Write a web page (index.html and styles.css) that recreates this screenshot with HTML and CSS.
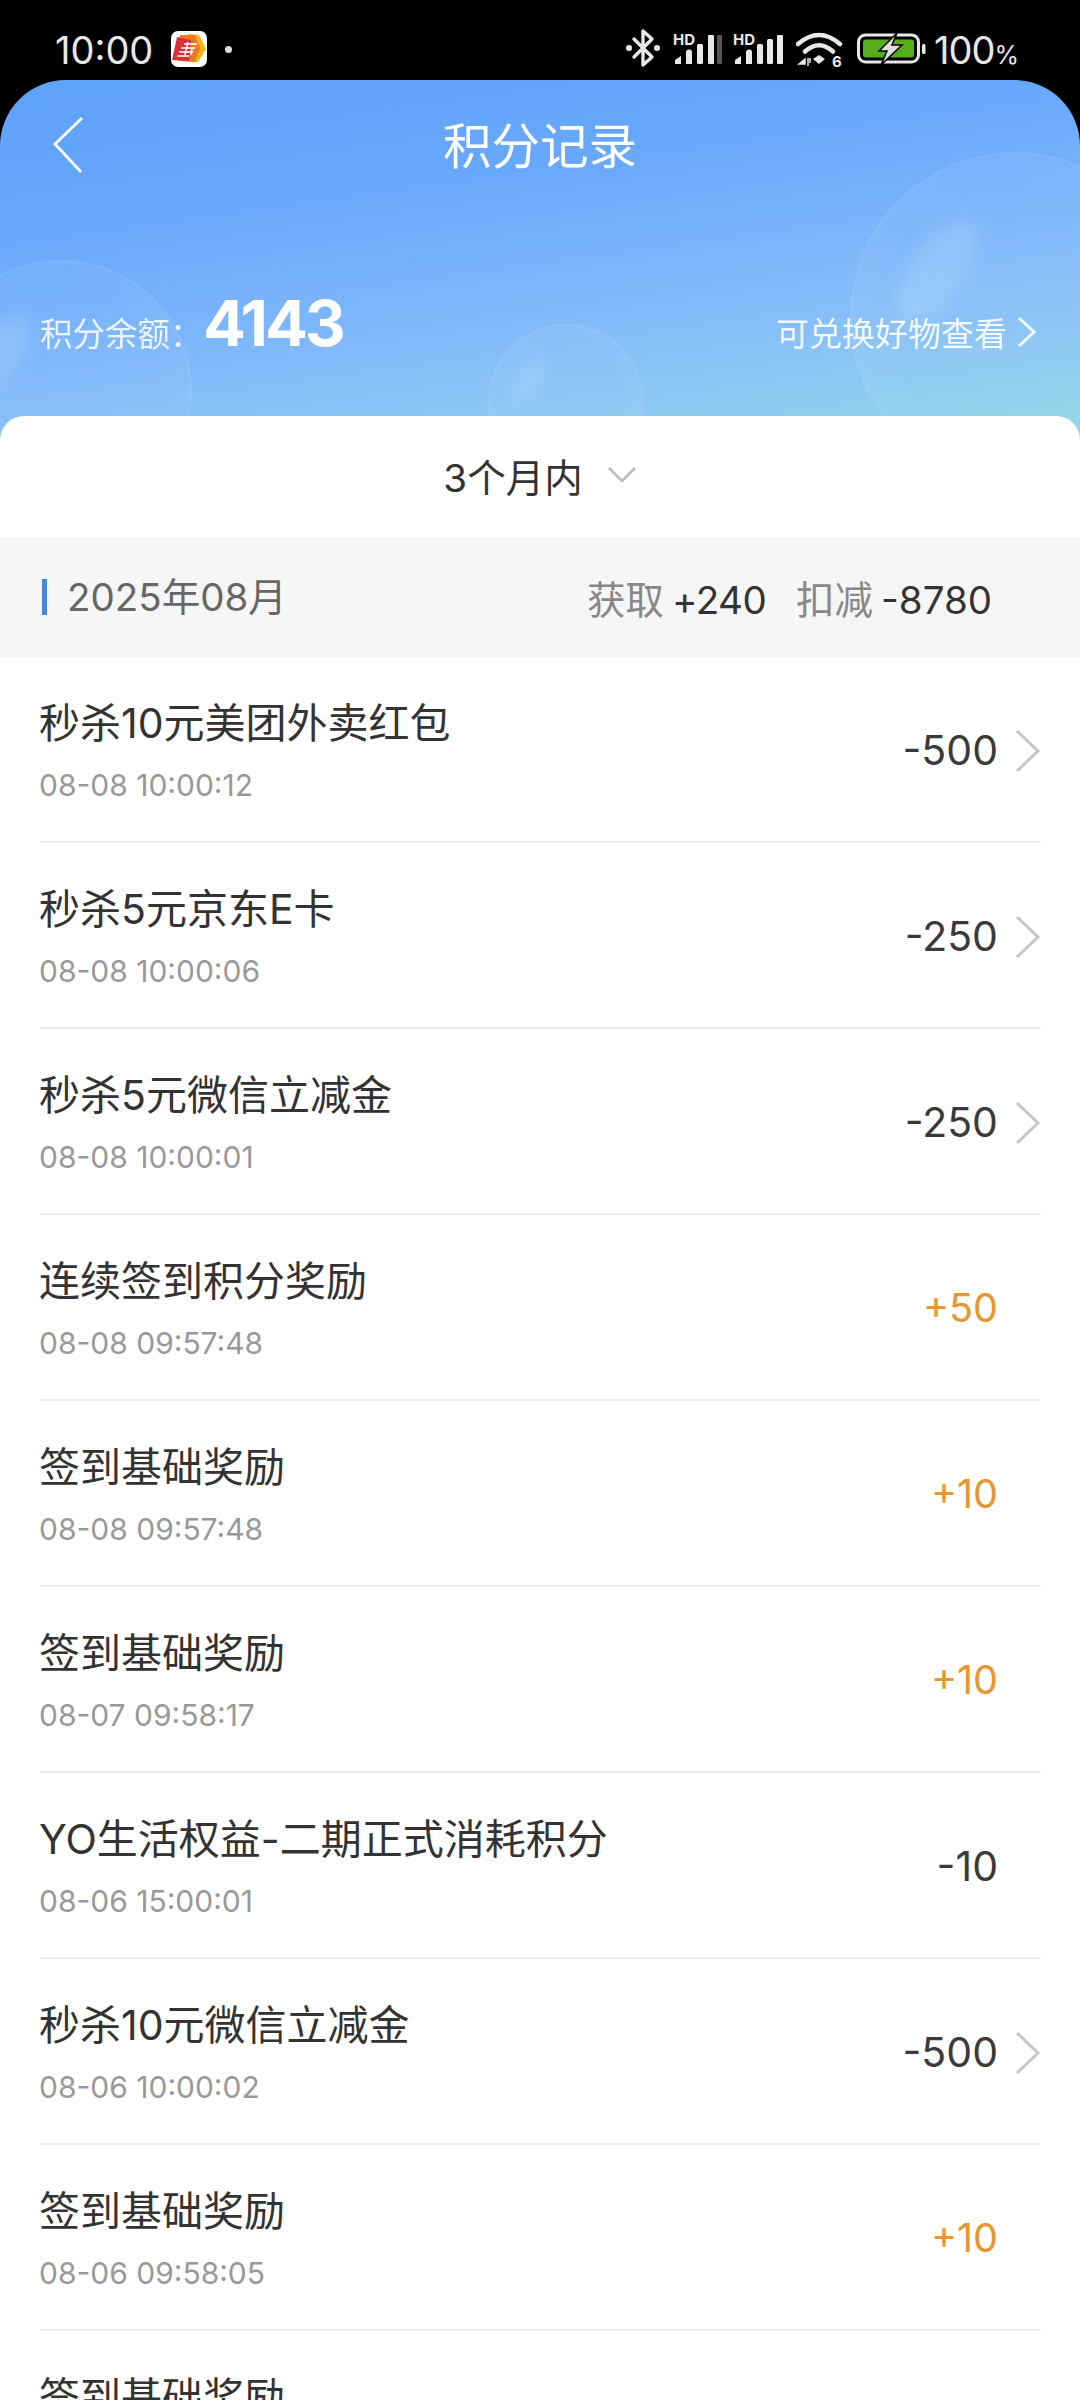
FILE: index.html
```html
<!DOCTYPE html>
<html lang="zh-CN">
<head>
    <meta charset="UTF-8">
    <meta name="viewport" content="width=device-width, initial-scale=1.0">
    <title>积分记录</title>
    <link rel="stylesheet" href="styles.css">
</head>
<body>
    <!-- status bar -->
    <div class="status-bar">
        <div class="status-left">
            <span class="clock">10:00</span>
            <svg class="app-icon" width="36" height="36" viewBox="0 0 36 36">
                <rect width="36" height="36" rx="7" fill="#fff"/>
                <path d="M17 3 L28 4 L35 18 L27 31 L16 30 Z" fill="#f7b416"/>
                <path d="M9 4 L24 4 L29 17 L24 31 L7 30 Z" fill="#ee7a22"/>
                <path d="M6 6 L20 9 L18 30 L1 29 Z" fill="#d9303a"/>
                <path d="M13 13 H26 M10 17 H24 M8 21 H22 M17 11 L14 24 M6 25 H18 M21 17 L20 24" stroke="#fff" stroke-width="1.6" fill="none"/>
            </svg>
            <span class="status-dot"></span>
        </div>
        <div class="status-right">
            <svg width="36" height="40" viewBox="0 0 36 40">
                <path d="M18 3 V37 L27 29 L9 11 M18 3 L27 11 L9 29" fill="none" stroke="#e8e8e8" stroke-width="3.4" stroke-linejoin="round" stroke-linecap="round"/>
                <circle cx="4" cy="20" r="3" fill="#e8e8e8"/>
                <circle cx="32" cy="20" r="3" fill="#e8e8e8"/>
            </svg>
            <div class="signal signal-first">
                <span class="hd">HD</span>
                <svg width="50" height="32" viewBox="0 0 50 32">
                    <path d="M2 30 V26 L8 22 V30 Z M13 30 V18 Q13 16 16 15.500 Q19 15 19 18 V30 Z" fill="#e8e8e8"/>
                    <rect x="24" y="10" width="6" height="20" rx="1.500" fill="#e8e8e8"/>
                    <rect x="35" y="1" width="6" height="29" rx="1" fill="#e8e8e8"/>
                    <rect x="44" y="1" width="5" height="29" rx="1" fill="#555"/>
                </svg>
            </div>
            <div class="signal">
                <span class="hd">HD</span>
                <svg width="50" height="32" viewBox="0 0 50 32">
                    <path d="M2 30 V26 L8 22 V30 Z M13 30 V18 Q13 16 16 15.500 Q19 15 19 18 V30 Z" fill="#e8e8e8"/>
                    <rect x="24" y="10" width="6" height="20" rx="1.500" fill="#e8e8e8"/>
                    <rect x="34" y="5" width="6" height="25" rx="1.500" fill="#e8e8e8"/>
                    <rect x="44" y="1" width="6" height="29" rx="1" fill="#e8e8e8"/>
                </svg>
            </div>
            <svg class="wifi" width="48" height="40" viewBox="0 0 48 40">
                <path d="M2 12 Q23 -6 44 12" fill="none" stroke="#e8e8e8" stroke-width="4.500" stroke-linecap="round"/>
                <path d="M9 19.500 Q23 7 37 19.500" fill="none" stroke="#e8e8e8" stroke-width="4.500" stroke-linecap="round"/>
                <path d="M17 27 L23 23 L29 27 L23 32 Z" fill="#e8e8e8"/>
                <path d="M3 32 L9 27 V32 Z M12 26 V34 M14 26 V31" fill="#e8e8e8" stroke="#e8e8e8" stroke-width="1.500"/>
                <text x="36" y="35" class="wifi-six">6</text>
            </svg>
            <svg class="battery" width="70" height="32" viewBox="0 0 70 32">
                <rect x="1.500" y="2" width="60" height="27" rx="7" fill="none" stroke="#e8e8e8" stroke-width="3"/>
                <rect x="6" y="6.500" width="51" height="18" rx="3" fill="#54ad19"/>
                <path d="M40 0 L22 18 H30 L24 32 L45 12 H35 Z" fill="#e0e0e0" stroke="#000" stroke-width="1.500"/>
                <rect x="65" y="11" width="3.500" height="10" rx="1.500" fill="#e8e8e8"/>
            </svg>
            <span class="battery-text">100<small>%</small></span>
        </div>
    </div>

    <!-- blue header with the balance -->
    <header class="hero">
        <span class="bubble bubble-left"></span>
        <span class="bubble bubble-mid"></span>
        <span class="bubble bubble-right"></span>
        <div class="nav">
            <svg class="back" width="32" height="58" viewBox="0 0 32 58">
                <path d="M30 2 L3 28 L29 56" fill="none" stroke="#fff" stroke-width="2.800"/>
            </svg>
            <h1>积分记录</h1>
        </div>
        <div class="balance">
            <div class="balance-left">
                <span class="balance-label">积分余额：</span>
                <span class="balance-num">4143</span>
            </div>
            <div class="balance-link">
                <span>可兑换好物查看</span>
                <svg width="20" height="32" viewBox="0 0 20 32">
                    <path d="M2 2 L17 16 L2 30" fill="none" stroke="#fff" stroke-width="3"/>
                </svg>
            </div>
        </div>
    </header>

    <main class="card">
        <div class="filter">
            <span>3个月内</span>
            <svg width="30" height="18" viewBox="0 0 30 18">
                <path d="M2 2 L15 15 L28 2" fill="none" stroke="#bbb" stroke-width="2.600"/>
            </svg>
        </div>
        <div class="month">
            <div class="month-name">2025年08月</div>
            <div class="month-sum">
                <span class="sum-label">获取</span><span class="sum-val sum-tight">+240</span>
                <span class="sum-label sum-second">扣减</span><span class="sum-val">-8780</span>
            </div>
        </div>
        <div class="list" id="list"></div>
    </main>

    <script src="list.js"></script>
</body>
</html>
```

FILE: list.js
```js
// points records, link = row has a detail arrow
const records = [
    { title: "秒杀10元美团外卖红包", time: "08-08 10:00:12", amount: "-500", link: true },
    { title: "秒杀5元京东E卡", time: "08-08 10:00:06", amount: "-250", link: true },
    { title: "秒杀5元微信立减金", time: "08-08 10:00:01", amount: "-250", link: true },
    { title: "连续签到积分奖励", time: "08-08 09:57:48", amount: "+50" },
    { title: "签到基础奖励", time: "08-08 09:57:48", amount: "+10" },
    { title: "签到基础奖励", time: "08-07 09:58:17", amount: "+10" },
    { title: "YO生活权益-二期正式消耗积分", time: "08-06 15:00:01", amount: "-10" },
    { title: "秒杀10元微信立减金", time: "08-06 10:00:02", amount: "-500", link: true },
    { title: "签到基础奖励", time: "08-06 09:58:05", amount: "+10" },
    { title: "签到基础奖励", time: "08-05 09:58:11", amount: "+10" }
];

const arrow = '<svg class="row-arrow" width="26" height="44" viewBox="0 0 26 44"><path d="M2 2 L23 22 L2 42" fill="none" stroke="#c6c6c6" stroke-width="3"/></svg>';

document.getElementById("list").innerHTML = records.map(function (r) {
    const cls = r.amount[0] === "+" ? "amount plus" : "amount";
    return '<div class="row"><div class="row-main"><div class="row-title">' + r.title +
        '</div><div class="row-time">' + r.time + '</div></div><div class="' + cls + '">' + r.amount +
        '</div><div class="row-end">' + (r.link ? arrow : "") + '</div></div>';
}).join("");
```

FILE: styles.css
```css
* {
    box-sizing: border-box;
}
html, body {
    margin: 0;
    height: 2400px;
    overflow: hidden;
}
body {
    background-color: #000;
    font-family: Inter, "Noto Sans CJK SC", sans-serif;
    color: #333;
}
.status-bar {
    height: 80px;
    display: flex;
    justify-content: space-between;
    padding: 28px 62px 0 55px;
    color: #e8e8e8;
}
.status-left {
    display: flex;
    align-items: flex-start;
}
.clock {
    font-size: 38px;
    line-height: 44px;
    width: 116px;
}
.app-icon {
    margin-top: 3px;
}
.status-dot {
    width: 7px;
    height: 7px;
    margin: 18px 0 0 18px;
    border-radius: 50%;
    background-color: #ddd;
}
.status-right {
    display: flex;
    align-items: flex-start;
    gap: 10px;
}
.signal {
    position: relative;
    width: 50px;
    height: 40px;
    padding-top: 6px;
}
.signal-first {
    margin-left: 2px;
}
.hd {
    position: absolute;
    left: 0;
    top: 4px;
    font-size: 15px;
    line-height: 15px;
    font-weight: 700;
}
.wifi {
    margin: 4px 0 0 3px;
}
.wifi-six {
    font-size: 15px;
    font-weight: 700;
    fill: #e8e8e8;
}
.battery {
    margin: 5px 0 0 3px;
}
.battery-text {
    font-size: 38px;
    line-height: 44px;
    letter-spacing: -1px;
    margin-left: -3px;
}
.battery-text small {
    font-size: 25px;
}

.hero {
    position: relative;
    height: 380px;
    overflow: hidden;
    border-radius: 66px 66px 0 0;
    background: linear-gradient(172deg, #5ea1fb 0%, #68a8fb 30%, #84bbfa 62%, #8cc8f3 78%, #92dcdf 100%);
    color: #fff;
}
.bubble {
    position: absolute;
    border-radius: 50%;
    border: 2px solid rgba(255, 255, 255, 0.05);
    background: radial-gradient(circle at 50% 50%, rgba(255, 255, 255, 0.03) 55%, rgba(255, 255, 255, 0.10) 100%);
}
/* the soft highlight inside each bubble */
.bubble::before {
    content: "";
    position: absolute;
    left: 18%;
    top: 18%;
    width: 16%;
    height: 36%;
    border-radius: 50%;
    background-color: rgba(255, 255, 255, 0.13);
    filter: blur(8px);
    transform: rotate(35deg);
}
.bubble-left {
    left: -70px;
    top: 180px;
    width: 262px;
    height: 262px;
}
.bubble-mid {
    left: 488px;
    top: 244px;
    width: 156px;
    height: 156px;
}
.bubble-right {
    left: 850px;
    top: 72px;
    width: 330px;
    height: 330px;
}
.nav {
    position: relative;
    height: 125px;
    display: flex;
    align-items: center;
    justify-content: center;
}
.nav h1 {
    margin: 0;
    font-size: 48.5px;
    font-weight: 400;
}
.back {
    position: absolute;
    left: 52px;
    top: 36px;
}
.balance {
    position: relative;
    display: flex;
    justify-content: space-between;
    align-items: baseline;
    padding: 79px 43px 0 40px;
}
.balance-left {
    display: flex;
    align-items: baseline;
}
.balance-label {
    font-size: 32.5px;
    width: 163px;
    white-space: nowrap;
    opacity: 0.85;
}
.balance-num {
    font-size: 63.5px;
    font-weight: 700;
    letter-spacing: -3px;
}
.balance-link {
    display: flex;
    align-items: center;
    gap: 10px;
    font-size: 33px;
    opacity: 0.9;
}

.card {
    position: relative;
    margin-top: -44px;
    overflow: hidden;
    border-radius: 24px 24px 0 0;
    background-color: #fff;
}
.filter {
    height: 121px;
    display: flex;
    align-items: center;
    justify-content: center;
    gap: 24px;
    padding-bottom: 3px;
    font-size: 38.5px;
}
.month {
    height: 120px;
    display: flex;
    align-items: center;
    justify-content: space-between;
    padding: 0 88px 0 42px;
    background-color: #f6f6f6;
    font-size: 38.5px;
}
.month-name {
    border-left: 5px solid #4a86dc;
    padding-left: 20px;
    line-height: 36px;
    color: #666;
}
.sum-label {
    color: #888;
    margin-right: 8px;
}
.sum-val {
    color: #333;
}
.sum-tight {
    letter-spacing: -0.5px;
}
.sum-second {
    margin-left: 19px;
}
.list {
    padding: 0 39px 0 40px;
}
.row {
    display: flex;
    align-items: center;
    padding: 40px 0 36px;
    border-bottom: 2px solid #ececec;
}
.row-main {
    flex: 1;
    margin-left: -1px;
}
.row-title {
    font-size: 41px;
    line-height: 50px;
    padding-top: 1px;
}
.row-time {
    margin-top: 17px;
    font-size: 30px;
    line-height: 40px;
    color: #999;
}
.amount {
    font-size: 41px;
    padding-bottom: 2px;
    color: #3a3a3a;
}
.plus {
    font-size: 39.5px;
    color: #e8962e;
}
.row-end {
    width: 43px;
    display: flex;
    justify-content: flex-end;
}
.row-arrow {
    display: block;
}
```
